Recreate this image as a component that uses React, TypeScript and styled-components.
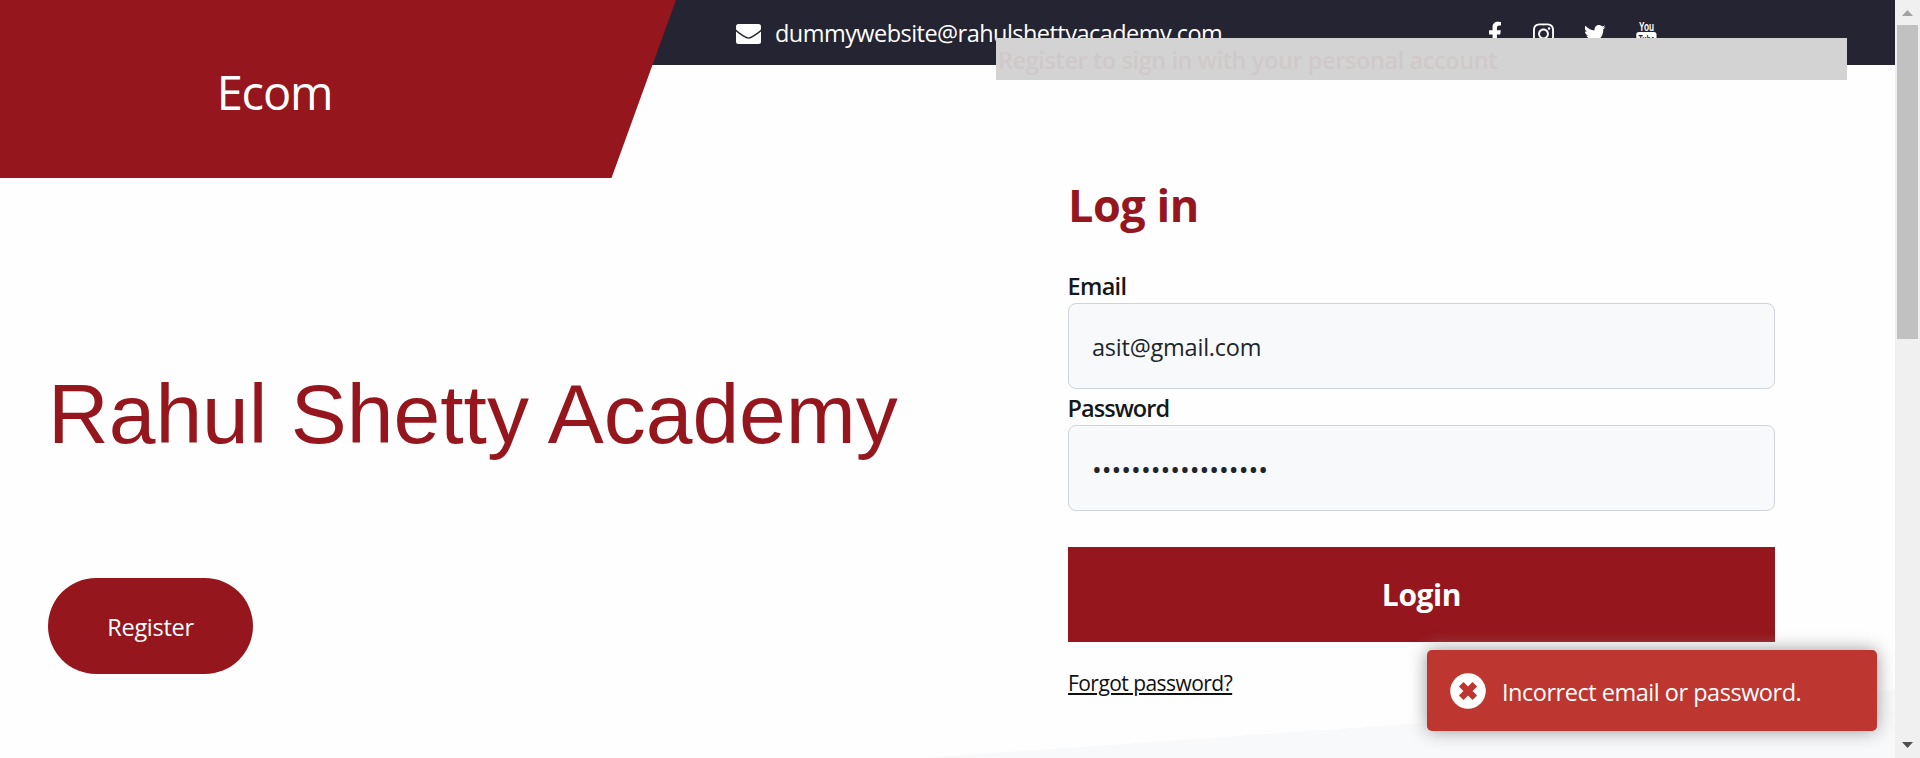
import React from 'react';
import styled, { createGlobalStyle } from 'styled-components';
import { FaFacebookF, FaInstagram, FaTwitter } from 'react-icons/fa';

const brandRed = '#95161d';
const uiFont = '"Open Sans", "Noto Sans", sans-serif';

const GlobalStyle = createGlobalStyle`
  * { box-sizing: border-box; }
  body { margin: 0; background: #fff; font-family: ${uiFont}; color: #212529; overflow: hidden; }
  h1, h2, p { margin: 0; }
`;

const Window = styled.div`
  display: flex;
  width: 1920px;
  height: 758px;
  overflow: hidden;
`;

const Page = styled.div`
  position: relative;
  flex: 1;
  height: 758px;
  overflow: hidden;
  background: #fefefe;
`;

const Slope = styled.div`
  position: absolute;
  right: 0;
  bottom: 0;
  width: 973px;
  height: 68px;
  background: #f8f9fb;
  clip-path: polygon(0 100%, 100% 0, 100% 100%);
`;

const TopBar = styled.header`
  position: relative;
  display: flex;
  align-items: flex-start;
  height: 65px;
  background: #252432;
`;

const Brand = styled.div`
  flex: none;
  width: 676px;
  height: 178px;
  padding-right: 127px;
  display: flex;
  align-items: center;
  justify-content: center;
  background: ${brandRed};
  clip-path: polygon(0 0, 100% 0, 611.5px 100%, 0 100%);
`;

const BrandName = styled.span`
  margin-top: 5px;
  color: #fff;
  font-size: 47px;
  line-height: 64px;
  letter-spacing: -1.2px;
`;

const Contact = styled.div`
  display: flex;
  align-items: center;
  gap: 14px;
  width: 752px;
  height: 68px;
  margin-left: 60px;
  color: #fff;
  font-size: 23.5px;
  letter-spacing: -0.54px;
  white-space: nowrap;

  span { padding-bottom: 2px; }
`;

const Socials = styled.nav`
  display: flex;
  gap: 30.5px;
  padding-top: 21px;
  color: #fff;
`;

const SocialCell = styled.div<{ $top: number; $width: number; $height: number }>`
  padding-top: ${p => p.$top}px;

  svg {
    display: block;
    width: ${p => p.$width}px;
    height: ${p => p.$height}px;
  }
`;

const Banner = styled.p`
  position: absolute;
  left: 996px;
  top: 38px;
  width: 851px;
  height: 42px;
  padding: 1px 0 0 2px;
  background: #d3d3d3;
  color: #cfc9ca;
  font-size: 23.5px;
  font-weight: 600;
  line-height: 42px;
  letter-spacing: -0.41px;
  white-space: nowrap;
`;

const Content = styled.main`
  position: relative;
  display: grid;
  grid-template-columns: 1068px 707px;
`;

const Hero = styled.section`
  padding: 299px 0 0 48px;
`;

const HeroTitle = styled.h1`
  color: ${brandRed};
  font-family: "Liberation Sans", Arial, sans-serif;
  font-size: 84px;
  font-weight: 400;
  line-height: 100px;
  white-space: nowrap;
`;

const RegisterButton = styled.button`
  display: block;
  width: 205px;
  height: 96px;
  margin-top: 114px;
  padding: 1px 0 0;
  border: 0;
  border-radius: 48px;
  background: ${brandRed};
  color: #fff;
  font: 400 23.5px ${uiFont};
  letter-spacing: -0.29px;
`;

const LoginForm = styled.form`
  padding-top: 110px;
`;

const LoginTitle = styled.h2`
  color: ${brandRed};
  font-size: 45px;
  font-weight: 700;
  line-height: 60px;
  letter-spacing: -0.5px;
`;

const FieldLabel = styled.label<{ $tracking: number; $gap: number }>`
  display: block;
  height: 36px;
  margin-top: ${p => p.$gap}px;
  color: #15181b;
  font-size: 23.5px;
  font-weight: 600;
  line-height: 38px;
  letter-spacing: ${p => p.$tracking}px;
  text-indent: -0.5px;
`;

const FieldInput = styled.input`
  display: block;
  width: 100%;
  height: 86px;
  padding: 1px 24px 0 23px;
  border: 1px solid #ced4da;
  border-radius: 8px;
  outline: none;
  background: #f8f9fb;
  color: #212529;
  font: 400 23.5px ${uiFont};
  letter-spacing: -0.22px;

  &[type='password'] {
    font-size: 26px;
    letter-spacing: 0;
  }
`;

const LoginButton = styled.button`
  display: block;
  width: 100%;
  height: 95px;
  margin-top: 36px;
  padding: 0;
  border: 0;
  background: ${brandRed};
  color: #fff;
  font: 700 30px ${uiFont};
  letter-spacing: -0.4px;
`;

const ForgotLink = styled.a`
  display: inline-block;
  margin-top: 25px;
  color: #111;
  font-size: 21px;
  line-height: 32px;
  letter-spacing: -0.55px;
  text-decoration: underline;
  text-decoration-thickness: 2px;
  text-underline-offset: 2px;
`;

const Toast = styled.div`
  position: absolute;
  left: 1427px;
  top: 650px;
  width: 450px;
  height: 81px;
  display: flex;
  align-items: center;
  gap: 16px;
  padding: 1px 0 0 23px;
  border-radius: 5px;
  background: #bd362f;
  box-shadow: 0 0 18px #999;
  color: #fff;
  font-size: 23.5px;
  letter-spacing: -0.48px;
  white-space: nowrap;

  span { padding-top: 1px; }
`;

const ScrollTrack = styled.aside`
  flex: none;
  display: flex;
  flex-direction: column;
  align-items: center;
  justify-content: space-between;
  width: 25px;
  height: 758px;
  background: #f0f0f0;

  svg { display: block; flex: none; }
`;

const ScrollThumb = styled.div`
  width: 21px;
  height: 314px;
  margin-bottom: auto;
  background: #c1c1c1;
`;

const EnvelopeIcon = () => (
  <svg width="25" height="20" viewBox="0 0 25 20">
    <rect width="25" height="20" rx="2.5" fill="#fff" />
    <path
      d="M-1 5.5C2 9 6.5 11.2 9.6 13.2c2.4 1.5 3.4 1.5 5.8 0C18.5 11.2 23 9 26 5.5"
      fill="none"
      stroke="#252432"
      strokeWidth="1.4"
    />
  </svg>
);

const YoutubeIcon = () => (
  <svg viewBox="0 0 21 25">
    <text x="3" y="9.5" fontFamily="Liberation Sans, sans-serif" fontSize="13" fontWeight="700" fill="#fff" textLength="15" lengthAdjust="spacingAndGlyphs">You</text>
    <rect x="0.3" y="11" width="20.2" height="13.5" rx="2.5" fill="#fff" />
    <text x="2.5" y="21.5" fontFamily="Liberation Sans, sans-serif" fontSize="11.5" fontWeight="700" fill="#252432" textLength="16" lengthAdjust="spacingAndGlyphs">Tube</text>
  </svg>
);

const ErrorIcon = () => (
  <svg width="36" height="36" viewBox="0 0 36 36">
    <circle cx="18" cy="18" r="17.8" fill="#fff" />
    <path d="M11.2 11.2l13.6 13.6M24.8 11.2l-13.6 13.6" stroke="#bd362f" strokeWidth="6.5" />
  </svg>
);

const ScrollArrow = ({ down = false }: { down?: boolean }) => (
  <svg width="25" height="25" viewBox="0 0 25 25">
    {down ? <path d="M7 9h11l-5.5 6z" fill="#505050" /> : <path d="M7 16h11l-5.5-6z" fill="#a3a3a3" />}
  </svg>
);

export default function App() {
  return (
    <>
      <GlobalStyle />
      <Window>
        <Page>
          <Slope />
          <TopBar>
            <Brand><BrandName>Ecom</BrandName></Brand>
            <Contact>
              <EnvelopeIcon />
              <span>dummywebsite@rahulshettyacademy.com</span>
            </Contact>
            <Socials>
              <SocialCell $top={0} $width={14} $height={24}><FaFacebookF /></SocialCell>
              <SocialCell $top={0.5} $width={21} $height={24}><FaInstagram /></SocialCell>
              <SocialCell $top={2} $width={21.5} $height={21.5}><FaTwitter /></SocialCell>
              <SocialCell $top={0} $width={21} $height={25}><YoutubeIcon /></SocialCell>
            </Socials>
          </TopBar>
          <Content>
            <Hero>
              <HeroTitle>Rahul Shetty Academy</HeroTitle>
              <RegisterButton type="button">Register</RegisterButton>
            </Hero>
            <LoginForm>
              <LoginTitle>Log in</LoginTitle>
              <FieldLabel $tracking={-0.7} $gap={32} htmlFor="email">Email</FieldLabel>
              <FieldInput id="email" type="text" defaultValue="asit@gmail.com" />
              <FieldLabel $tracking={-0.95} $gap={0} htmlFor="password">Password</FieldLabel>
              <FieldInput id="password" type="password" defaultValue="abcdefghijklmnopqr" />
              <LoginButton type="button">Login</LoginButton>
              <ForgotLink>Forgot password?</ForgotLink>
            </LoginForm>
          </Content>
          <Banner>Register to sign in with your personal account</Banner>
          <Toast role="alert">
            <ErrorIcon />
            <span>Incorrect email or password.</span>
          </Toast>
        </Page>
        <ScrollTrack>
          <ScrollArrow />
          <ScrollThumb />
          <ScrollArrow down />
        </ScrollTrack>
      </Window>
    </>
  );
}
